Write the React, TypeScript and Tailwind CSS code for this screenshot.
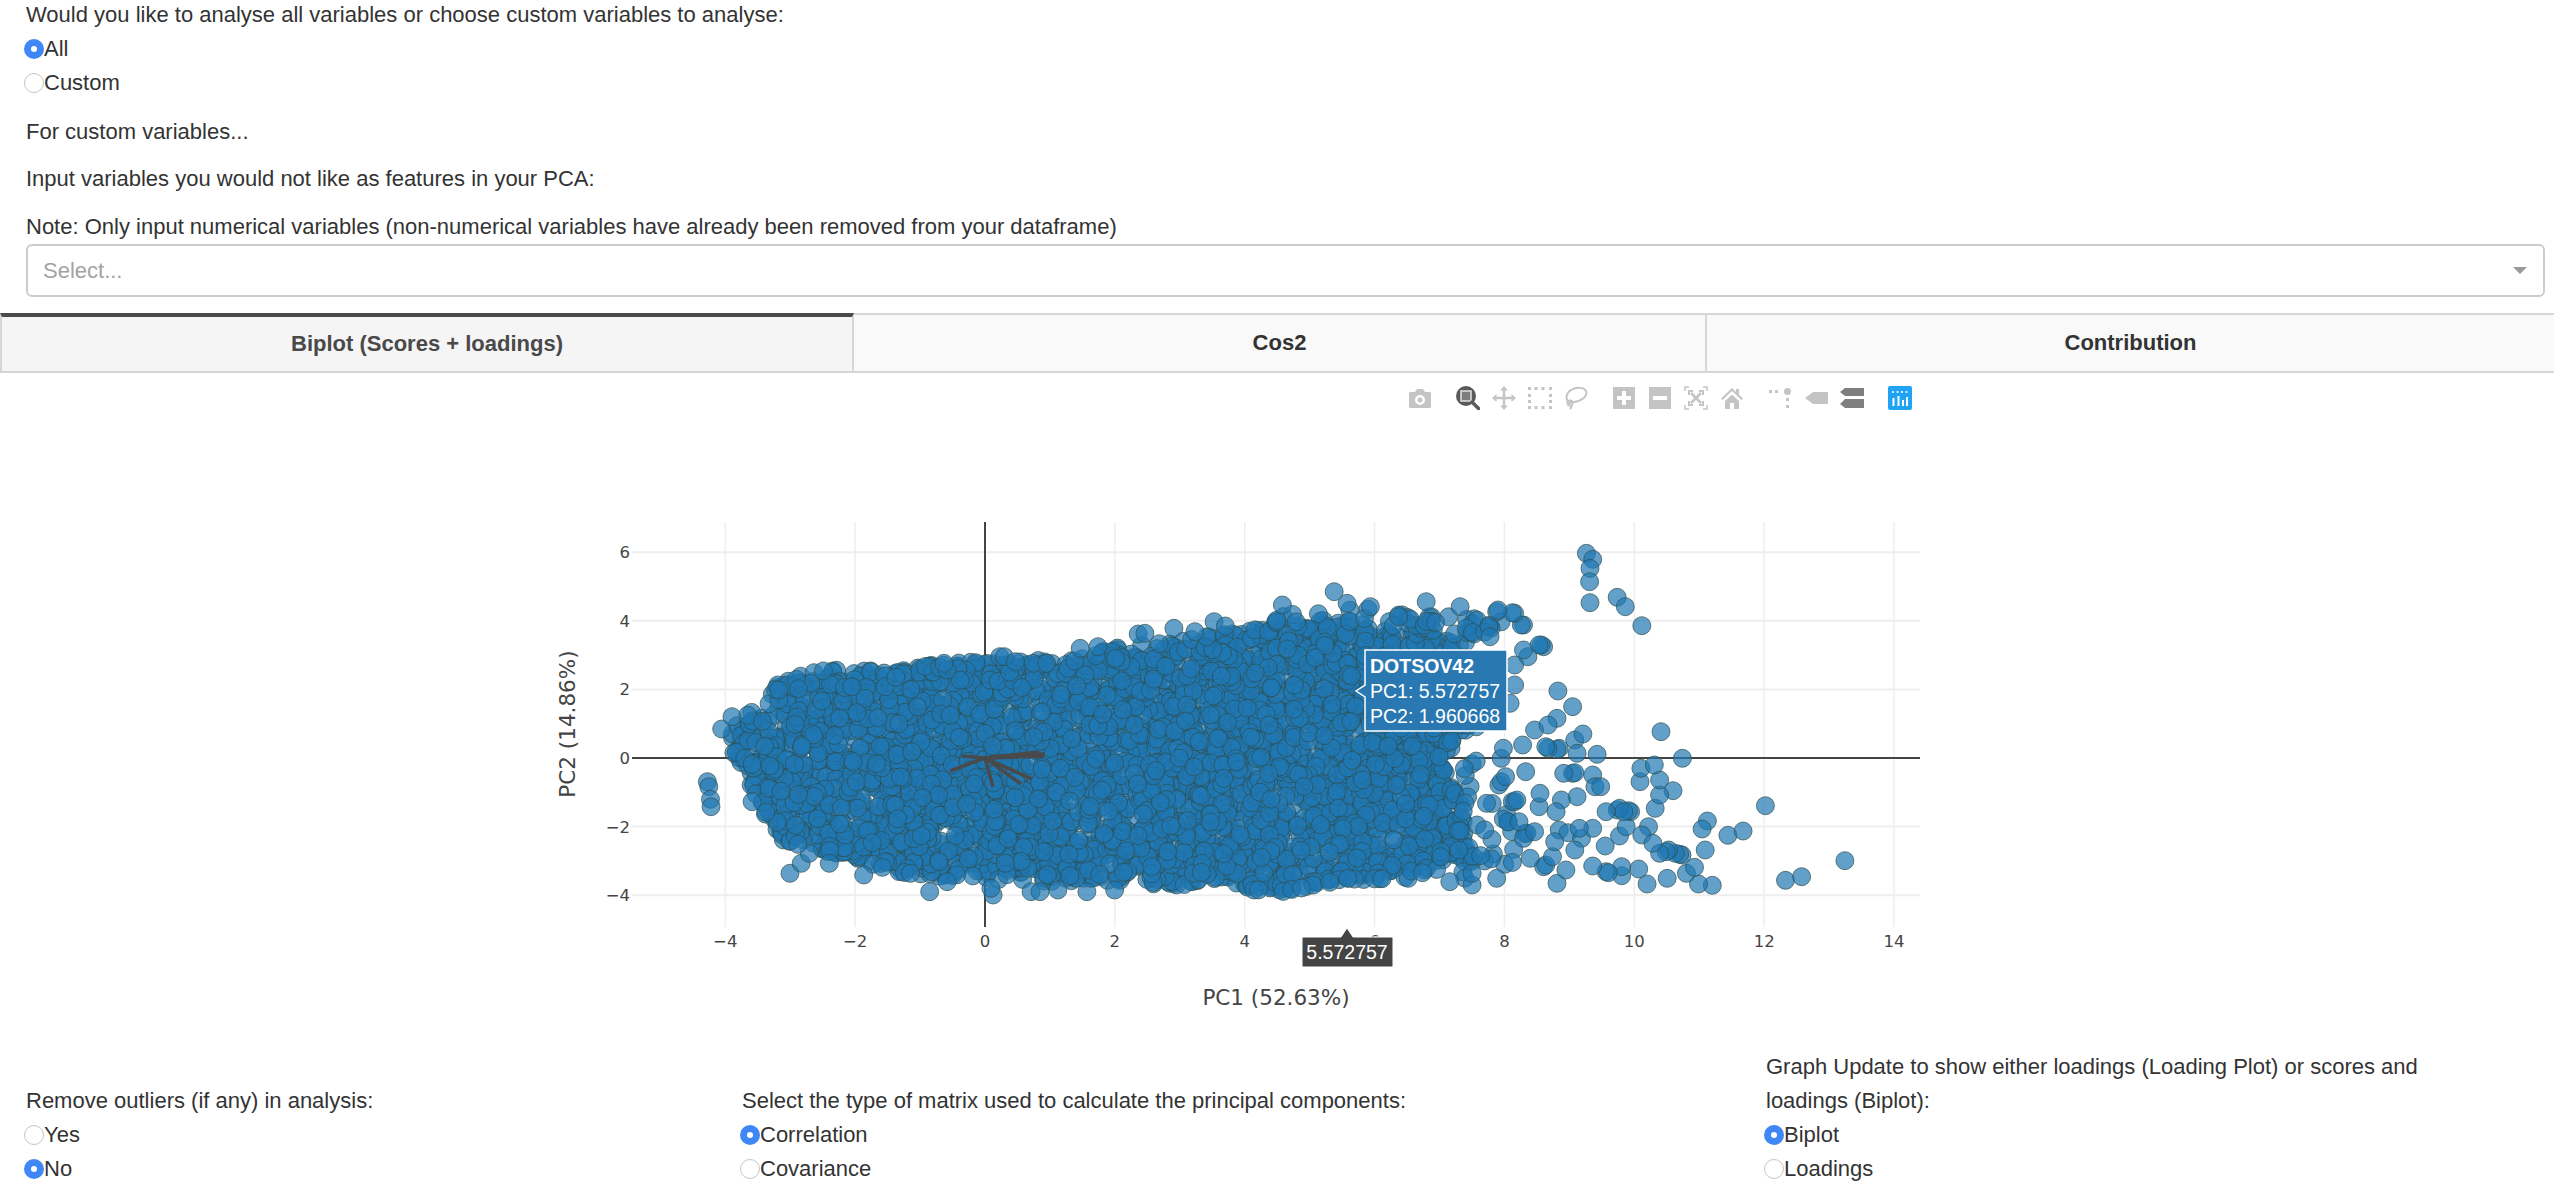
import React, { useMemo } from 'react';

// zoom-crop coordinates of the stray points, converted to page pixels below
const RIGHT_POINTS = [
  [776,130],[790,148],[784,175],[783,215],[784,278],[845,262],[863,290],[900,347],[943,665],[991,745],[1177,887],[1047,933],[1035,957],[1093,976],[1127,963],[1355,1052],[1222,1111],[1258,1100],[1058,1126],[1027,1122],[1042,1020],[990,1035],[985,1033],[975,1030],[960,1020],[955,1025],[940,1030],[912,1122],[893,1077],[855,1097],[855,1070],[820,1085],[825,1088],[790,1068],[957,1105],[1000,1090],[1018,1072],[818,1008],[850,978],[865,950],[915,950],[900,975],[925,1000],[930,895],[970,842],[940,855],[940,810],[896,815],[898,775],[928,765],[800,733],[790,795],[795,830],[808,830],[875,905],[870,902],[845,900],[850,895],[860,905],[820,905],[745,790],[750,788],[725,790],[755,860],[720,870],[708,905],[670,890],[672,850],[710,625],[745,590],[712,543],[660,660],[690,645],[715,715],[710,718],[690,715],[685,710],[750,690],[768,672],[755,730],[640,785],[633,705],[585,745],[590,715],[580,825],[585,815],[595,800],[610,875],[615,875],[620,870],[680,410],[675,405],[670,405],[645,440],[635,420],[615,465],[615,525],[605,580],[635,345],[630,345],[615,310],[610,308],[575,305],[578,300],[560,380],[417,275],[493,290],[211,245],[95,285],[355,320],[292,290],[240,280],[710,1120],[730,1080],[680,1070],[685,1065],[650,1045],[700,1040],[520,1125],[520,1090],[470,1115],[575,1105],[715,960],[735,968],[765,985],[790,955],[760,955],[705,995],[750,1020],[635,985],[600,935],[625,935],[660,965],[490,1020],[450,1040],
];
const LEFT_POINTS = [
  [375,815],[378,830],[382,868],[383,890],[407,657],[430,620],[475,875],[560,1090],[585,1060],[603,1030],[578,1003],[648,1060],[725,1095],[767,1072],[830,1090],[873,1145],[912,1115],[1015,1155],[1010,1135],[1100,1145],[1120,1145],[1160,1140],[1225,1145],[1287,1140],[1030,440],[1040,440],[1210,415],[1250,410],[1340,372],[1355,370],[1420,355],[1467,365],[1510,335],[1535,348],[905,460],[1065,455],[1105,460],[1135,460],[535,540],
];

const DENSE: [number, number][] = [
  [730,743],[736,713],[768,707],[772,687],[794,677],[826,670],[897,670],[942,660],[986,663],[1076,657],[1120,647],[1165,643],[1240,630],[1285,624],[1329,618],[1374,626],[1430,632],[1463,645],[1470,727],[1440,762],[1460,800],[1472,862],[1374,873],[1285,890],[1240,887],[1120,883],[986,880],[897,873],[852,857],[785,843],[768,820],[750,783],[732,757],
];
const SPARSE: [number, number][] = [
  [1240,627],[1285,610],[1329,603],[1374,610],[1463,617],[1510,622],[1480,645],[1490,727],[1470,777],[1494,803],[1530,835],[1530,860],[1463,880],[1374,880],[1285,895],[1240,890],
];

const LOADINGS = [
  [962,756],[950,771],[993,787],[1021,784],[1032,779],[1045,754],[1044,756],[1042,755],[1040,753],[1038,752],
];

const X_TICKS = [-4,-2,0,2,4,6,8,10,12,14];
const Y_TICKS = [6,4,2,0,-2,-4];
const px = (v: number) => 985 + 64.93 * v;
const py = (v: number) => 758 - 34.3 * v;
const tickLabel = (v: number) => (v < 0 ? `\u2212${-v}` : `${v}`);

const insidePoly = (x: number, y: number, poly: [number, number][]) => {
  let hit = false;
  for (let i = 0, j = poly.length - 1; i < poly.length; j = i++) {
    const [xi, yi] = poly[i];
    const [xj, yj] = poly[j];
    if (yi > y !== yj > y && x < ((xj - xi) * (y - yi)) / (yj - yi) + xi) hit = !hit;
  }
  return hit;
};

const makeBlob = () => {
  let seed = 1234567;
  const rand = () => {
    seed = (seed + 0x6d2b79f5) | 0;
    let t = Math.imul(seed ^ (seed >>> 15), 1 | seed);
    t = (t + Math.imul(t ^ (t >>> 7), 61 | t)) ^ t;
    return ((t ^ (t >>> 14)) >>> 0) / 4294967296;
  };
  const out: [number, number][] = [];
  while (out.length < 4300) {
    const x = 725 + rand() * 810;
    const y = 600 + rand() * 295;
    if (insidePoly(x, y, DENSE)) out.push([x, y]);
  }
  let extra = 0;
  while (extra < 110) {
    const x = 1240 + rand() * 295;
    const y = 600 + rand() * 295;
    if (insidePoly(x, y, SPARSE) && !insidePoly(x, y, DENSE)) {
      out.push([x, y]);
      extra++;
    }
  }
  return out;
};

const Radio = ({ label, checked }: { label: string; checked?: boolean }) => (
  <label className="-ml-[2px] flex h-[34px] items-center">
    {checked ? (
      <span className="flex h-5 w-5 shrink-0 items-center justify-center rounded-full bg-[#3f87f5]">
        <span className="h-1.5 w-1.5 rounded-full bg-white" />
      </span>
    ) : (
      <span className="h-5 w-5 shrink-0 rounded-full border border-[#c4c4c4] bg-white" />
    )}
    <span>{label}</span>
  </label>
);

const ModeIcon = ({ children }: { children: React.ReactNode }) => (
  <svg viewBox="0 0 24 24" className="h-6 w-6">
    {children}
  </svg>
);

const Toolbar = () => (
  <div className="absolute left-[1408px] top-[13px] flex gap-6">
    <div className="flex">
      <ModeIcon>
        <path fill="#c4c4c4" fillRule="evenodd" d="M2 6h5l2-3h6l2 3h5a1 1 0 0 1 1 1v14a1 1 0 0 1-1 1H2a1 1 0 0 1-1-1V7a1 1 0 0 1 1-1zm10 3a5 5 0 1 0 0 10 5 5 0 0 0 0-10zm0 2.500a2.500 2.500 0 1 1 0 5 2.500 2.500 0 0 1 0-5z" />
      </ModeIcon>
    </div>
    <div className="flex gap-3">
      <ModeIcon>
        <circle cx="10" cy="10" r="10" fill="#5a5a5a" />
        <rect x="5" y="5" width="10" height="10" fill="#7d7d7d" stroke="#e2e2e2" strokeWidth="1.500" />
        <path d="M16 16l7 7" stroke="#5a5a5a" strokeWidth="3.500" strokeLinecap="round" />
      </ModeIcon>
      <ModeIcon>
        <path fill="#c4c4c4" d="M12 0l4 4.500h-2.800v6.300h6.300V8l4.500 4-4.500 4v-2.800h-6.300v6.300H16L12 24l-4-4.500h2.800v-6.300H4.500V16L0 12l4.500-4v2.800h6.300V4.500H8z" />
      </ModeIcon>
      <ModeIcon>
        <path fill="#c4c4c4" d="M0 1h3v3H0zm6.500 0h3v3h-3zm7 0h3v3h-3zM21 1h3v3h-3zM0 8h3v3H0zm21 0h3v3h-3zM0 14h3v3H0zm21 0h3v3h-3zM0 20h3v3H0zm6.500 0h3v3h-3zm7 0h3v3h-3zM21 20h3v3h-3z" />
      </ModeIcon>
      <ModeIcon>
        <g fill="none" stroke="#c4c4c4" strokeWidth="2">
          <path d="M5 17C1 13 2 7 7 4c5-3 13-3 15 1 2 5-4 10-12 11-2 0-3 0-5 1z" />
          <circle cx="6" cy="17" r="2.500" />
          <path d="M7 19c1 2 0 3-1 4" />
        </g>
      </ModeIcon>
    </div>
    <div className="flex gap-3">
      <ModeIcon>
        <path fill="#c4c4c4" fillRule="evenodd" d="M1 1h22v22H1zm9 4v5H5v4h5v5h4v-5h5v-4h-5V5z" />
      </ModeIcon>
      <ModeIcon>
        <path fill="#c4c4c4" fillRule="evenodd" d="M1 1h22v22H1zm4 9v4h14v-4z" />
      </ModeIcon>
      <ModeIcon>
        <g fill="none" stroke="#c4c4c4" strokeWidth="1.500">
          <path d="M5 1H1v4M19 1h4v4M5 23H1v-4M19 23h4v-4" />
          <path strokeWidth="2.500" d="M7 7l10 10M17 7L7 17" />
          <path strokeWidth="2" d="M5 9V5h4M15 5h4v4M5 15v4h4M19 15v4h-4" />
        </g>
      </ModeIcon>
      <ModeIcon>
        <path fill="#c4c4c4" d="M12 2L1 12.500l1.500 1.500L12 5l9.500 9 1.500-1.500L19 8.700V3h-3v3zM5 15l7-6.500 7 6.500v8h-5v-6h-4v6H5z" />
      </ModeIcon>
    </div>
    <div className="flex gap-3">
      <ModeIcon>
        <path fill="#c4c4c4" d="M1 4h3v3H1zm6 0h3v3H7zm11 8h3v3h-3zm0 7h3v3h-3z" />
        <circle cx="19.500" cy="5.500" r="3.500" fill="#c4c4c4" />
      </ModeIcon>
      <ModeIcon>
        <path fill="#c4c4c4" d="M1 12l8-6h15v12H9z" />
      </ModeIcon>
      <ModeIcon>
        <path fill="#7f7f7f" d="M0 6l5-4h19v8H5zm0 12l5-5h19v9H5z" />
      </ModeIcon>
    </div>
    <div className="flex">
      <ModeIcon>
        <rect width="24" height="24" rx="2" fill="#20a3f5" />
        <g fill="#fff">
          <path d="M4 5h2v2H4zm4.500 0h2v2h-2zm4.500 0h2v2h-2zm4.500 0h2v2h-2z" opacity=".8" />
          <path d="M4.500 12h2v8h-2zm5-2h2v10h-2zm4.500 4h2v6h-2zm4-3h2v9h-2z" />
        </g>
      </ModeIcon>
    </div>
  </div>
);

const PcaPlot = () => {
  const blob = useMemo(makeBlob, []);
  const strays = useMemo(
    () => [
      ...LEFT_POINTS.map(([x, y]) => [540 + x / 2.24, 510 + y / 3]),
      ...RIGHT_POINTS.map(([x, y]) => [1240 + x / 2.24, 510 + y / 3]),
    ],
    [],
  );

  return (
    <svg viewBox="540 373 1474 665" className="mx-auto h-[665px] w-[1474px] font-['DejaVu_Sans',sans-serif]">
      <g stroke="#eeeeee" strokeWidth="2">
        {X_TICKS.map(v => (
          <line key={v} x1={px(v)} x2={px(v)} y1="522" y2="927" strokeWidth="1.500" />
        ))}
        {Y_TICKS.map(v => (
          <line key={v} x1="632" x2="1920" y1={py(v)} y2={py(v)} />
        ))}
      </g>
      <g stroke="#444444" strokeWidth="2">
        <line x1="985" x2="985" y1="522" y2="927" />
        <line x1="632" x2="1920" y1="758" y2="758" />
      </g>

      <g fill="#1f77b4" fillOpacity="0.7" stroke="#2f4f4f" strokeOpacity="0.7" strokeWidth="1">
        {blob.map(([x, y], i) => (
          <circle key={i} cx={x.toFixed(1)} cy={y.toFixed(1)} r="9" />
        ))}
        {strays.map(([x, y], i) => (
          <circle key={i} cx={x.toFixed(1)} cy={y.toFixed(1)} r="9" />
        ))}
      </g>

      <g stroke="#4a4a4a" strokeWidth="3.500">
        {LOADINGS.map(([x, y], i) => (
          <line key={i} x1="985" y1="758" x2={x} y2={y} />
        ))}
      </g>

      <g fill="#444444" className="text-[16.500px]">
        {X_TICKS.map(v => (
          <text key={v} x={px(v)} y="947" textAnchor="middle">
            {tickLabel(v)}
          </text>
        ))}
        {Y_TICKS.map(v => (
          <text key={v} x="630" y={py(v) + 6} textAnchor="end">
            {tickLabel(v)}
          </text>
        ))}
      </g>
      <g fill="#444444" className="text-[21.500px]">
        <text x="1276" y="1005" textAnchor="middle">PC1 (52.63%)</text>
        <text transform="translate(575 724) rotate(-90)" textAnchor="middle">PC2 (14.86%)</text>
      </g>

      {/* hover labels */}
      <path d="M1365 650h142v81h-142v-34l-9-6 9-6z" fill="#2a78b2" stroke="#fff" strokeWidth="1.500" />
      <g fill="#fff" className="font-['Liberation_Sans',sans-serif] text-[19.500px]">
        <text x="1370" y="673" fontWeight="700">DOTSOV42</text>
        <text x="1370" y="698">PC1: 5.572757</text>
        <text x="1370" y="723">PC2: 1.960668</text>
      </g>
      <path d="M1347 928l6 9h40v30h-91v-30h39z" fill="#444444" stroke="#fff" strokeWidth="1" />
      <text x="1347" y="959" textAnchor="middle" fill="#fff" className="font-['Liberation_Sans',sans-serif] text-[19.500px]">5.572757</text>
    </svg>
  );
};

export default function App() {
  return (
    <div className="h-[1190px] overflow-hidden bg-white font-['Liberation_Sans',Arial,sans-serif] text-[22px] leading-[34px] text-[#333]">
      <div className="-mt-[2px] px-[26px]">
        <p>Would you like to analyse all variables or choose custom variables to analyse:</p>
        <Radio label="All" checked />
        <Radio label="Custom" />
        <p className="mt-[15px]">For custom variables...</p>
        <p className="mt-[13px]">Input variables you would not like as features in your PCA:</p>
        <p className="mt-[14px]">Note: Only input numerical variables (non-numerical variables have already been removed from your dataframe)</p>
        <div className="mr-[-17px] flex h-[53px] items-center justify-between rounded-md border-2 border-[#cccccc] pl-[15px] pr-[16px]">
          <span className="text-[#a3a3a3]">Select...</span>
          <span className="h-0 w-0 border-x-[7px] border-t-[7px] border-x-transparent border-t-[#999]" />
        </div>
      </div>

      <div className="mt-4 flex font-bold">
        <div className="flex h-[60px] w-[854px] shrink-0 items-center justify-center border-x-2 border-t-4 border-b-2 border-x-[#d6d6d6] border-t-[#4a4a4a] border-b-[#d6d6d6] bg-[#f5f5f5] text-[#49494a]">
          Biplot (Scores + loadings)
        </div>
        <div className="flex h-[60px] w-[853px] shrink-0 items-center justify-center border-y-2 border-r-2 border-[#d6d6d6] bg-[#f9f9f9]">
          Cos2
        </div>
        <div className="flex h-[60px] flex-1 items-center justify-center border-y-2 border-[#d6d6d6] bg-[#f9f9f9]">
          Contribution
        </div>
      </div>

      <div className="relative h-[677px]">
        <PcaPlot />
        <Toolbar />
      </div>

      <div className="flex items-end pl-[26px]">
        <div className="w-[716px]">
          <p>Remove outliers (if any) in analysis:</p>
          <Radio label="Yes" />
          <Radio label="No" checked />
        </div>
        <div className="w-[1024px]">
          <p>Select the type of matrix used to calculate the principal components:</p>
          <Radio label="Correlation" checked />
          <Radio label="Covariance" />
        </div>
        <div className="w-[700px]">
          <p>Graph Update to show either loadings (Loading Plot) or scores and loadings (Biplot):</p>
          <Radio label="Biplot" checked />
          <Radio label="Loadings" />
        </div>
      </div>
    </div>
  );
}
